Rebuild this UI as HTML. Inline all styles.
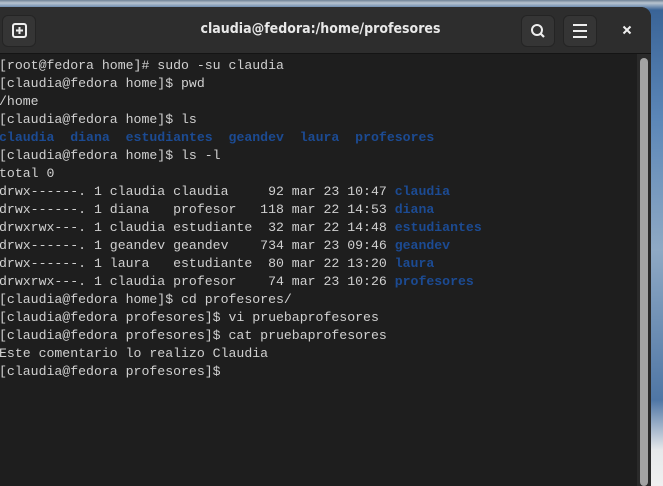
<!DOCTYPE html>
<html><head><meta charset="utf-8"><style>
html,body{margin:0;padding:0;width:663px;height:486px;overflow:hidden;background:#3b6ea8;}
.desk{position:absolute;inset:0;background:linear-gradient(180deg,#6f8296 0,#b8c4d0 3px,#3a6497 10px,#5c87b8 120px,#8fa9c4 250px,#4f76a5 400px,#e6e8ea 450px,#f0f0f0 486px);}
.win{position:absolute;left:0;top:7px;width:651px;height:479px;background:#1e1e1e;border-top-right-radius:10px;overflow:hidden;}
.hb{position:absolute;left:0;top:0;width:651px;height:46px;background:#2d2d2d;border-bottom:1px solid #141414;}
.btn{position:absolute;top:8px;height:32px;width:34px;background:#353535;border-radius:6px;border:1px solid #242424;box-sizing:border-box;}
.title{position:absolute;left:-5px;width:651px;top:14px;text-align:center;color:#e8e8e8;font:bold 14px "DejaVu Sans Condensed","Liberation Sans",sans-serif;}
.term{position:absolute;left:-1px;top:50px;color:#d0d0d0;font:13.2px/18px "Liberation Mono","DejaVu Sans Mono",monospace;white-space:pre;}
.b{color:#1c4b93;font-weight:bold}
.sb{position:absolute;left:637px;top:47px;width:14px;height:432px;background:#2a2a2a;}
.th{position:absolute;left:640px;top:58px;width:8px;height:428px;background:#a3a3a3;border-radius:4px;}
</style></head><body>
<div class="desk"></div>
<div class="win">
<div class="hb">
<div class="btn" style="left:2px"><svg width="32" height="30" viewBox="0 0 32 30"><rect x="10" y="8" width="13" height="13" rx="2" fill="none" stroke="#eee" stroke-width="2"/><path d="M16.5 11v7M13 14.5h7" stroke="#eee" stroke-width="2"/></svg></div>
<div class="title">claudia@fedora:/home/profesores</div>
<div class="btn" style="left:521px"><svg width="32" height="30" viewBox="0 0 32 30"><circle cx="15" cy="14" r="5" fill="none" stroke="#eee" stroke-width="2"/><path d="M18.5 17.5l3.5 3.5" stroke="#eee" stroke-width="2.2"/></svg></div>
<div class="btn" style="left:563px"><svg width="32" height="30" viewBox="0 0 32 30"><path d="M9 9h14M9 15h14M9 21h14" stroke="#eee" stroke-width="2"/></svg></div>
<svg style="position:absolute;left:621px;top:17px" width="12" height="12" viewBox="0 0 12 12"><path d="M2.5 2.5l7 7M9.5 2.5l-7 7" stroke="#eee" stroke-width="2"/></svg>
</div>
<div class="term">[root@fedora home]# sudo -su claudia
[claudia@fedora home]$ pwd
/home
[claudia@fedora home]$ ls
<span class="b">claudia</span>  <span class="b">diana</span>  <span class="b">estudiantes</span>  <span class="b">geandev</span>  <span class="b">laura</span>  <span class="b">profesores</span>
[claudia@fedora home]$ ls -l
total 0
drwx------. 1 claudia claudia     92 mar 23 10:47 <span class="b">claudia</span>
drwx------. 1 diana   profesor   118 mar 22 14:53 <span class="b">diana</span>
drwxrwx---. 1 claudia estudiante  32 mar 22 14:48 <span class="b">estudiantes</span>
drwx------. 1 geandev geandev    734 mar 23 09:46 <span class="b">geandev</span>
drwx------. 1 laura   estudiante  80 mar 22 13:20 <span class="b">laura</span>
drwxrwx---. 1 claudia profesor    74 mar 23 10:26 <span class="b">profesores</span>
[claudia@fedora home]$ cd profesores/
[claudia@fedora profesores]$ vi pruebaprofesores
[claudia@fedora profesores]$ cat pruebaprofesores
Este comentario lo realizo Claudia
[claudia@fedora profesores]$ </div>
<div class="sb"></div>
</div>
<div class="th"></div>
</body></html>
